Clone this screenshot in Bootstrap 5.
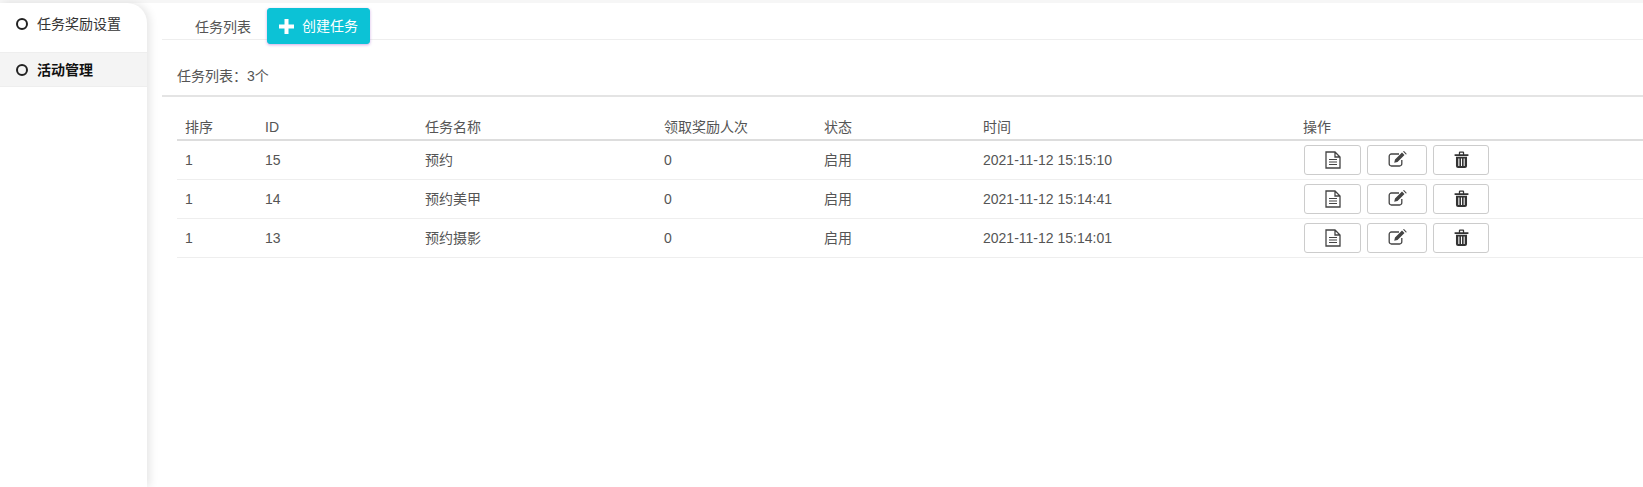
<!DOCTYPE html>
<html lang="zh">
<head>
<meta charset="utf-8">
<title>任务列表</title>
<link href="https://cdn.jsdelivr.net/npm/bootstrap@5.3.0/dist/css/bootstrap.min.css" rel="stylesheet">
<style>
html,body{height:100%;overflow:hidden}
body{font-family:"Liberation Sans","Noto Sans CJK SC",sans-serif;font-size:14px;color:#555;background:#fff;line-height:20px}
.page-shell{height:487px;border-top:3px solid #f6f6f6}
.side-panel{width:147px;flex:none;border-top-right-radius:20px;box-shadow:3px 0 8px rgba(0,0,0,.1);padding-top:1px;background:#fff;position:relative}
.side-item{height:35px;display:flex;align-items:center;padding-left:17px;color:#333}
.side-item.first-item{height:35px;margin-bottom:13px;padding-top:4px}
.side-item.active-item{background:#f4f4f4;border-top:1px solid #eee;border-bottom:1px solid #eee;color:#111;font-weight:700}
.ring{width:12px;height:12px;border:2px solid #222;border-radius:50%;margin-right:9px;flex:none;margin-left:-1px}
.main-panel{min-width:0;padding-left:15px}
.tab-bar{height:37px;border-bottom:1px solid #eee;padding-left:33px;display:flex;align-items:flex-start}
.tab-label{padding:14px 0 0;line-height:20px;color:#555;margin-right:16px}
.add-btn{--bs-btn-color:#fff;--bs-btn-bg:#0cc2d6;--bs-btn-border-color:#0cc2d6;--bs-btn-hover-color:#fff;--bs-btn-hover-bg:#0cc2d6;--bs-btn-font-size:14px;--bs-btn-border-radius:3px;width:103px;height:36px;margin-top:5px;padding:0;display:flex;align-items:center;justify-content:center;gap:8px;box-shadow:0 1px 3px rgba(150,70,200,.45);position:relative;z-index:1}
.count-line{height:57px;border-bottom:2px solid #e4e4e4;padding:25px 0 0 15px;line-height:20px}
.wide-colon{font-family:"Noto Sans CJK TC",sans-serif}
.task-table{margin:20px 0 0 15px;width:calc(100% - 15px);table-layout:fixed;--bs-table-color:#555}
.task-table th,.task-table td{padding:0 8px;font-weight:400;border-bottom:1px solid #eee;vertical-align:middle;color:#555}
.task-table th{height:22px;padding-bottom:2px;border-bottom:2px solid #ddd}
.task-table td{height:39px}
.c1{width:80px}.c2{width:160px}.c3{width:239px}.c4{width:160px}.c5{width:159px}.c6{width:320px}
.op-group{display:flex;gap:6px;margin-left:1px}
.op-btn{--bs-btn-border-color:#ccc;--bs-btn-bg:#fff;--bs-btn-hover-bg:#fff;--bs-btn-hover-border-color:#ccc;--bs-btn-border-radius:3px;height:30px;padding:0;display:flex;align-items:center;justify-content:center}
.w57{width:57px}.w60{width:60px}.w56{width:56px}
.op-btn svg{display:block}
.lift-icon{margin-top:-2px}
</style>
</head>
<body>
<svg width="0" height="0" class="d-none">
<defs>
<symbol id="i-file" viewBox="0 0 16 18"><path d="M1 1h9l5 5v11H1z M10 1v5h5" fill="none" stroke="#444" stroke-width="1.3"/><path d="M4 8.500h8M4 11h8M4 13.500h8" stroke="#444" stroke-width="1.200"/></symbol>
<symbol id="i-edit" viewBox="0 0 19 16"><path d="M11 3H3.500A2.200 2.200 0 0 0 1.200 5.200v7.600A2.200 2.200 0 0 0 3.500 15h8a2.200 2.200 0 0 0 2.300-2.200V9" fill="none" stroke="#444" stroke-width="1.300"/><path d="M7 8.500 14 1.500l2.500 2.500-7 7-3.300.8zM15 .6l1-.5 2.600 2.600-.5 1z" fill="#444"/></symbol>
<symbol id="i-trash" viewBox="0 0 14 16"><path d="M.5 3h13v1.700H.5zM4.500 3V1.500A1 1 0 0 1 5.500.5h3a1 1 0 0 1 1 1V3H8.300V1.700H5.700V3z" fill="#333"/><path fill-rule="evenodd" d="M1.800 5.500h10.400V14a2 2 0 0 1-2 2H3.800a2 2 0 0 1-2-2zM4 7v7h1V7zM6.500 7v7h1V7zM9 7v7h1V7z" fill="#333"/></symbol>
</defs>
</svg>
<div class="page-shell d-flex">
  <aside class="side-panel">
    <div class="side-item first-item"><span class="ring"></span>任务奖励设置</div>
    <div class="side-item active-item"><span class="ring"></span>活动管理</div>
  </aside>
  <main class="main-panel flex-grow-1">
    <div class="tab-bar">
      <span class="tab-label">任务列表</span>
      <button type="button" class="btn add-btn">
        <svg width="15" height="15" viewBox="0 0 15 15"><path d="M5.500 0h4v5.500H15v4H9.500V15h-4V9.500H0v-4h5.500z" fill="#fff"/></svg>创建任务
      </button>
    </div>
    <div class="count-line">任务列表<span class="wide-colon">：</span>3个</div>
    <table class="table task-table mb-0">
      <thead>
        <tr><th class="c1">排序</th><th class="c2">ID</th><th class="c3">任务名称</th><th class="c4">领取奖励人次</th><th class="c5">状态</th><th class="c6">时间</th><th>操作</th></tr>
      </thead>
      <tbody>
        <tr><td>1</td><td>15</td><td>预约</td><td>0</td><td>启用</td><td>2021-11-12 15:15:10</td>
          <td><div class="op-group"><button type="button" class="btn op-btn w57"><svg width="16" height="18"><use href="#i-file"/></svg></button><button type="button" class="btn op-btn w60"><svg class="lift-icon" width="19" height="16"><use href="#i-edit"/></svg></button><button type="button" class="btn op-btn w56"><svg width="15" height="17"><use href="#i-trash"/></svg></button></div></td></tr>
        <tr><td>1</td><td>14</td><td>预约美甲</td><td>0</td><td>启用</td><td>2021-11-12 15:14:41</td>
          <td><div class="op-group"><button type="button" class="btn op-btn w57"><svg width="16" height="18"><use href="#i-file"/></svg></button><button type="button" class="btn op-btn w60"><svg class="lift-icon" width="19" height="16"><use href="#i-edit"/></svg></button><button type="button" class="btn op-btn w56"><svg width="15" height="17"><use href="#i-trash"/></svg></button></div></td></tr>
        <tr><td>1</td><td>13</td><td>预约摄影</td><td>0</td><td>启用</td><td>2021-11-12 15:14:01</td>
          <td><div class="op-group"><button type="button" class="btn op-btn w57"><svg width="16" height="18"><use href="#i-file"/></svg></button><button type="button" class="btn op-btn w60"><svg class="lift-icon" width="19" height="16"><use href="#i-edit"/></svg></button><button type="button" class="btn op-btn w56"><svg width="15" height="17"><use href="#i-trash"/></svg></button></div></td></tr>
      </tbody>
    </table>
  </main>
</div>
</body>
</html>
